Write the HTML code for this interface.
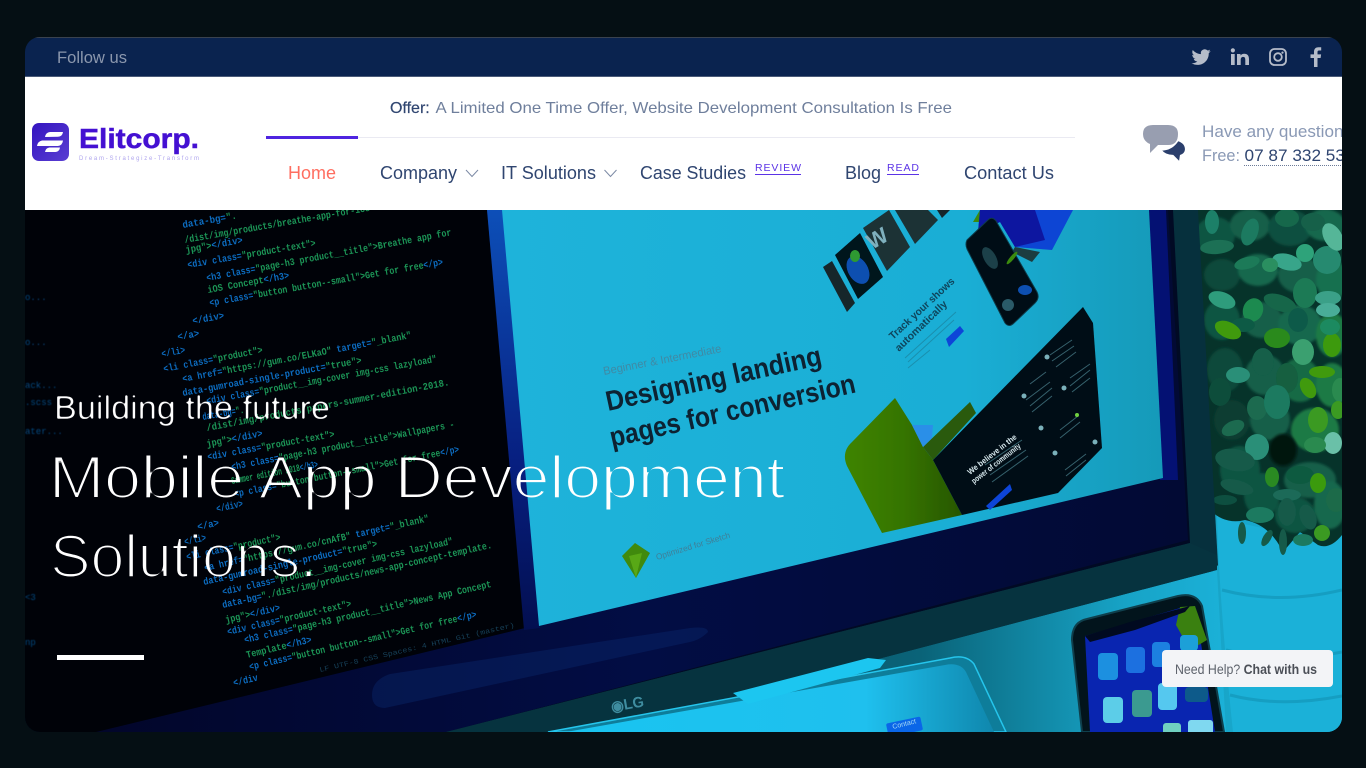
<!DOCTYPE html>
<html lang="en"><head><meta charset="utf-8"><title>Elitcorp</title>
<style>
html,body{margin:0;padding:0;width:1366px;height:768px;overflow:hidden;background:#050f14}
svg{display:block;position:absolute;left:0;top:0}
text{font-family:"Liberation Sans",sans-serif}
.n{font-size:18px;fill:#2f4570}
.code text{font-family:"Liberation Mono",monospace;font-size:10px;font-weight:bold;fill:#1b9556}
.code tspan{fill:#0b6cc0}
.dim{fill:#0a4a80;font-family:"Liberation Mono",monospace;font-size:9px}
</style></head><body>
<svg width="1366" height="768" viewBox="0 0 1366 768" xmlns="http://www.w3.org/2000/svg">
<defs>
<clipPath id="page"><rect x="25" y="37" width="1317" height="695" rx="15"/></clipPath>
<clipPath id="hero"><rect x="25" y="210" width="1317" height="522"/></clipPath>
<filter id="thin" x="-5%" y="-20%" width="110%" height="140%"><feMorphology operator="erode" radius="1"/><feGaussianBlur stdDeviation="0.3"/></filter>
<filter id="thin2" x="-5%" y="-20%" width="110%" height="140%"><feGaussianBlur stdDeviation="0.7"/><feComponentTransfer><feFuncA type="linear" slope="3.4" intercept="-1.75"/></feComponentTransfer></filter>
<filter id="b3"><feGaussianBlur stdDeviation="0.35"/></filter>
<filter id="b6"><feGaussianBlur stdDeviation="0.6"/></filter>
<filter id="b1" x="-5%" y="-5%" width="110%" height="110%"><feGaussianBlur stdDeviation="1.2"/></filter>
<linearGradient id="wall" x1="0" x2="1" y1="0" y2="0"><stop offset="0" stop-color="#07475c"/><stop offset=".55" stop-color="#0a6378"/><stop offset=".85" stop-color="#17a3c6"/><stop offset="1" stop-color="#1bb1d8"/></linearGradient>
<linearGradient id="cy" x1="0" x2="1" y1="0" y2="0"><stop offset="0" stop-color="#1eb3da"/><stop offset=".7" stop-color="#1aaed5"/><stop offset="1" stop-color="#159ab9"/></linearGradient>
<linearGradient id="strip" x1="0" x2="0" y1="0" y2="1"><stop offset="0" stop-color="#0d4fb8"/><stop offset=".6" stop-color="#071f80"/><stop offset="1" stop-color="#030f50"/></linearGradient>
<linearGradient id="navy" x1="0" x2="1" y1="0" y2="0"><stop offset="0" stop-color="#02062a"/><stop offset=".5" stop-color="#020d44"/><stop offset="1" stop-color="#020a34"/></linearGradient>
<linearGradient id="logo" x1="0" x2="1" y1="0" y2="1"><stop offset="0" stop-color="#3414c0"/><stop offset="1" stop-color="#5a3fd2"/></linearGradient>
<linearGradient id="tab" x1="0" x2="1" y1="0" y2="0"><stop offset="0" stop-color="#19c4f0"/><stop offset=".7" stop-color="#1fc0ee"/><stop offset="1" stop-color="#0f87ad"/></linearGradient>
<linearGradient id="grn" x1="0" x2="1" y1="0" y2="0"><stop offset="0" stop-color="#3f8400"/><stop offset=".5" stop-color="#357400"/><stop offset="1" stop-color="#275600"/></linearGradient>
</defs>
<g clip-path="url(#page)">
<!-- top bar -->
<rect x="25" y="37" width="1317" height="40" fill="#0a234f"/>
<rect x="25" y="37" width="1317" height="1" fill="#3a424f"/>
<rect x="25" y="76" width="1317" height="1" fill="#4a5a78"/>
<text x="57" y="63" font-size="17" fill="#8b97ad" textLength="70" lengthAdjust="spacingAndGlyphs">Follow us</text>
<path transform="translate(1191.500 47.500) scale(.8)" fill="#b5bcc9" d="M23.95 4.57a10 10 0 0 1-2.82.77 4.96 4.96 0 0 0 2.16-2.72c-.95.55-2 .96-3.12 1.19a4.92 4.92 0 0 0-8.38 4.48C7.69 8.1 4.07 6.13 1.64 3.16a4.82 4.82 0 0 0-.67 2.48c0 1.71.87 3.21 2.19 4.1a4.9 4.9 0 0 1-2.23-.62v.06a4.92 4.92 0 0 0 3.95 4.83 4.9 4.9 0 0 1-2.21.08 4.94 4.94 0 0 0 4.6 3.42A9.87 9.87 0 0 1 0 19.54a13.94 13.94 0 0 0 7.55 2.21c9.05 0 14-7.5 14-13.98 0-.21 0-.42-.02-.63a9.94 9.94 0 0 0 2.46-2.55z"/>
<path fill="#b5bcc9" d="M1231 54h3.700v11H1231zM1232.850 48.300a2.100 2.100 0 1 1 0 4.200 2.100 2.100 0 0 1 0-4.200zM1237 54h3.500v1.600c.7-1.200 2-1.900 3.700-1.900 3.500 0 4.800 2.100 4.800 5.500V65h-3.700v-5.100c0-1.600-.4-3-2.100-3-1.800 0-2.500 1.300-2.500 3V65H1237z"/>
<g fill="none" stroke="#b5bcc9" stroke-width="1.800"><rect x="1270" y="49" width="16" height="16" rx="4.500"/><circle cx="1278" cy="57" r="3.800"/></g><circle cx="1282.500" cy="52.600" r="1.100" fill="#b5bcc9"/>
<path fill="#b5bcc9" d="M1314 67v-9h-3.500v-3.600h3.500v-2.600c0-3 1.800-4.600 4.500-4.600 1.300 0 2.400.1 2.700.1v3.200h-1.900c-1.500 0-1.800.7-1.800 1.700v2.200h3.600l-.5 3.600h-3.100v9z"/>
<!-- white header -->
<rect x="25" y="77" width="1317" height="133" fill="#fff"/>
<rect x="32" y="123" width="37" height="38" rx="7" fill="url(#logo)"/>
<path fill="#fff" d="M45 137q.6-4.500 5-5H63q-.6 4.500-5 4.800zM37 146q.6-4.500 5-5.500H63q-.6 5-5 5.500zM45 152q.6-4 4.500-4.500H60q-.6 4.200-4.500 4.500z"/>
<text x="79" y="148" font-size="28" font-weight="bold" fill="#4410d2" stroke="#4410d2" stroke-width=".5" textLength="120" lengthAdjust="spacingAndGlyphs">Elitcorp.</text>
<text x="79" y="160" font-size="6" fill="#b0a6ee" textLength="120">Dream-Strategize-Transform</text>
<text x="390" y="113" font-size="16" fill="#2f4570" stroke="#2f4570" stroke-width=".2">Offer:</text>
<text x="435.500" y="113" font-size="16" fill="#6f7f9c" textLength="516.500" lengthAdjust="spacingAndGlyphs">A Limited One Time Offer, Website Development Consultation Is Free</text>
<rect x="266" y="137" width="809" height="1" fill="#eaeaf2"/>
<rect x="266" y="136" width="92" height="3" fill="#4f24e0"/>
<text x="288" y="179" font-size="18" fill="#ff6e60" textLength="48" lengthAdjust="spacingAndGlyphs">Home</text>
<text class="n" x="380" y="179" textLength="77" lengthAdjust="spacingAndGlyphs">Company</text>
<path d="M466 170l6 6.500 6-6.500" fill="none" stroke="#7c8aa5" stroke-width="1"/>
<text class="n" x="501" y="179" textLength="95" lengthAdjust="spacingAndGlyphs">IT Solutions</text>
<path d="M604.500 170l6 6.500 6-6.500" fill="none" stroke="#7c8aa5" stroke-width="1"/>
<text class="n" x="640" y="179" textLength="106" lengthAdjust="spacingAndGlyphs">Case Studies</text>
<text x="755" y="171" font-size="10.500" fill="#5b33e6" textLength="46">REVIEW</text>
<rect x="755" y="174" width="46" height="1" fill="#5b33e6"/>
<text class="n" x="845" y="179" textLength="36" lengthAdjust="spacingAndGlyphs">Blog</text>
<text x="887" y="171" font-size="10.500" fill="#5b33e6" textLength="32">READ</text>
<rect x="887" y="174" width="32" height="1" fill="#5b33e6"/>
<text class="n" x="964" y="179" textLength="90" lengthAdjust="spacingAndGlyphs">Contact Us</text>
<!-- chat icon -->
<path fill="#989eb0" d="M1153 125H1168Q1178 125 1178 134 1178 145 1168 145H1158L1150 153V144Q1143 141 1143 134 1143 125 1153 125z"/>
<path fill="#2b3f6c" stroke="#fff" stroke-width="1.200" d="M1161 150Q1172 150 1178 140.500 1186 143 1185.500 150 1185 154 1180.500 155.500L1179.500 162 1173 155.500Q1165 155.500 1161 150z"/>
<text x="1202" y="137" font-size="16.500" fill="#8a99b5" textLength="150" lengthAdjust="spacingAndGlyphs">Have any questions</text>
<text x="1202" y="161" font-size="16.500" fill="#8a99b5" textLength="38" lengthAdjust="spacingAndGlyphs">Free:</text>
<text x="1244.500" y="161" font-size="16.500" fill="#2f4570" textLength="110" lengthAdjust="spacingAndGlyphs">07 87 332 535</text>
<line x1="1244" y1="165.500" x2="1342" y2="165.500" stroke="#6b7a98" stroke-width="1" stroke-dasharray="1 1"/>
<!-- HERO -->
<g clip-path="url(#hero)">
<rect x="25" y="210" width="1317" height="522" fill="#000208"/>
<polygon points="1200,510 1342,510 1342,732 400,732 1000,590" fill="url(#wall)"/>
<!-- pot -->
<path d="M1217 515Q1280 540 1342 525V732H1233Q1219 600 1217 515z" fill="#1bb1d8"/>
<path d="M1222 590Q1280 605 1342 590M1226 650Q1280 665 1342 652M1230 695Q1280 708 1342 696" stroke="#159ec2" stroke-width="3" fill="none"/>
<!-- plant -->
<path d="M1190 210H1342V535Q1330 550 1318 545L1300 532 1283 552Q1270 525 1245 520 1225 525 1210 510z" fill="#06332a"/>
<g filter="url(#b1)">
<ellipse cx="1215" cy="235" rx="20" ry="18" fill="#0e5442"/><ellipse cx="1250" cy="225" rx="20" ry="16" fill="#125f48"/><ellipse cx="1290" cy="228" rx="22" ry="18" fill="#0d5040"/><ellipse cx="1325" cy="225" rx="20" ry="16" fill="#14684e"/>
<ellipse cx="1222" cy="275" rx="18" ry="16" fill="#0b4a3a"/><ellipse cx="1258" cy="270" rx="20" ry="16" fill="#14684e"/><ellipse cx="1300" cy="275" rx="22" ry="18" fill="#125f48"/><ellipse cx="1332" cy="280" rx="16" ry="20" fill="#16704f"/>
<ellipse cx="1222" cy="320" rx="18" ry="20" fill="#0e5442"/><ellipse cx="1262" cy="320" rx="20" ry="18" fill="#125f48"/><ellipse cx="1300" cy="325" rx="22" ry="20" fill="#14684e"/><ellipse cx="1332" cy="335" rx="16" ry="22" fill="#1c7a45"/>
<ellipse cx="1225" cy="370" rx="18" ry="22" fill="#0b4a3a"/><ellipse cx="1265" cy="375" rx="20" ry="20" fill="#125f48"/><ellipse cx="1300" cy="380" rx="20" ry="22" fill="#166a44"/><ellipse cx="1332" cy="385" rx="16" ry="22" fill="#1c7a45"/>
<ellipse cx="1232" cy="420" rx="18" ry="20" fill="#0a3e32"/><ellipse cx="1270" cy="420" rx="20" ry="20" fill="#125f48"/><ellipse cx="1315" cy="430" rx="24" ry="22" fill="#1c7a45"/>
<ellipse cx="1240" cy="470" rx="20" ry="24" fill="#0e5442"/><ellipse cx="1310" cy="480" rx="26" ry="18" fill="#125f48"/><ellipse cx="1262" cy="495" rx="18" ry="22" fill="#0e5442"/><ellipse cx="1295" cy="515" rx="20" ry="18" fill="#0e5442"/><ellipse cx="1330" cy="505" rx="16" ry="24" fill="#14684e"/>
</g>
<ellipse cx="1283" cy="450" rx="14" ry="16" fill="#021410" filter="url(#b1)"/>
<g filter="url(#b3)">
<ellipse cx="1217" cy="247" rx="17" ry="7" transform="rotate(-5 1217 247)" fill="#1b6f55"/><ellipse cx="1287" cy="262" rx="15" ry="8" transform="rotate(15 1287 262)" fill="#38a58a"/><ellipse cx="1327" cy="260" rx="14" ry="14" fill="#268a70"/><ellipse cx="1333" cy="237" rx="9" ry="15" transform="rotate(-30 1333 237)" fill="#54b698"/><ellipse cx="1305" cy="253" rx="9" ry="9" fill="#2ea37a"/><ellipse cx="1222" cy="300" rx="14" ry="8" transform="rotate(20 1222 300)" fill="#2f9c7c"/><ellipse cx="1253" cy="310" rx="10" ry="12" transform="rotate(20 1253 310)" fill="#1f8a50"/><ellipse cx="1305" cy="293" rx="12" ry="15" fill="#1c7a55"/><ellipse cx="1328" cy="298" rx="13" ry="7" fill="#3aa088"/><ellipse cx="1328" cy="310" rx="12" ry="7" fill="#4aad98"/><ellipse cx="1280" cy="303" rx="17" ry="8" transform="rotate(20 1280 303)" fill="#14664a"/><ellipse cx="1243" cy="325" rx="12" ry="7" fill="#115a44"/><ellipse cx="1228" cy="330" rx="14" ry="8" transform="rotate(25 1228 330)" fill="#3f9a10"/><ellipse cx="1277" cy="338" rx="13" ry="10" fill="#2a8a1a"/><ellipse cx="1303" cy="352" rx="11" ry="13" fill="#3aa070"/><ellipse cx="1332" cy="345" rx="9" ry="12" fill="#3d9a10"/><ellipse cx="1330" cy="327" rx="10" ry="8" fill="#1f8a60"/><ellipse cx="1298" cy="320" rx="10" ry="12" fill="#105a48"/><ellipse cx="1263" cy="362" rx="11" ry="14" fill="#125f48"/><ellipse cx="1287" cy="378" rx="11" ry="15" fill="#125f40"/><ellipse cx="1238" cy="375" rx="12" ry="8" fill="#2a8f78"/><ellipse cx="1322" cy="372" rx="13" ry="6" fill="#3f9a10"/><ellipse cx="1308" cy="388" rx="7" ry="11" transform="rotate(-30 1308 388)" fill="#3f9a10"/><ellipse cx="1220" cy="392" rx="11" ry="14" fill="#0d4d3a"/><ellipse cx="1257" cy="408" rx="10" ry="12" fill="#1a6a50"/><ellipse cx="1277" cy="402" rx="13" ry="17" fill="#1a7a60"/><ellipse cx="1318" cy="420" rx="10" ry="13" fill="#3a9a20"/><ellipse cx="1233" cy="428" rx="12" ry="7" transform="rotate(-25 1233 428)" fill="#1a6a50"/><ellipse cx="1257" cy="447" rx="12" ry="13" fill="#2a8f78"/><ellipse cx="1333" cy="443" rx="9" ry="11" fill="#6ac0a8"/><ellipse cx="1315" cy="445" rx="11" ry="8" fill="#2a8a50"/><ellipse cx="1235" cy="460" rx="20" ry="11" transform="rotate(10 1235 460)" fill="#125a48"/><ellipse cx="1300" cy="475" rx="14" ry="9" fill="#105a40"/><ellipse cx="1318" cy="483" rx="8" ry="10" fill="#3a9a10"/><ellipse cx="1272" cy="477" rx="7" ry="10" fill="#2a8a20"/><ellipse cx="1237" cy="487" rx="17" ry="7" transform="rotate(15 1237 487)" fill="#125a48"/><ellipse cx="1287" cy="495" rx="14" ry="6" fill="#1a6a58"/><ellipse cx="1287" cy="512" rx="9" ry="14" fill="#125a48"/><ellipse cx="1308" cy="517" rx="8" ry="13" transform="rotate(-20 1308 517)" fill="#125a48"/><ellipse cx="1260" cy="515" rx="14" ry="8" fill="#1a7a60"/><ellipse cx="1322" cy="533" rx="8" ry="8" fill="#3a9a20"/><ellipse cx="1283" cy="542" rx="4" ry="13" fill="#125a48"/><ellipse cx="1303" cy="540" rx="10" ry="6" fill="#1a7a60"/><ellipse cx="1267" cy="538" rx="4" ry="9" transform="rotate(30 1267 538)" fill="#125a48"/><ellipse cx="1242" cy="533" rx="4" ry="11" fill="#125a48"/><ellipse cx="1250" cy="232" rx="8" ry="14" transform="rotate(20 1250 232)" fill="#1a7a60"/><ellipse cx="1287" cy="218" rx="12" ry="9" fill="#16684c"/><ellipse cx="1313" cy="222" rx="12" ry="9" fill="#14604a"/><ellipse cx="1212" cy="222" rx="7" ry="12" fill="#1f8068"/><ellipse cx="1247" cy="263" rx="13" ry="6" transform="rotate(-15 1247 263)" fill="#1b7a58"/><ellipse cx="1270" cy="265" rx="8" ry="7" fill="#2a8f60"/><ellipse cx="1340" cy="390" rx="8" ry="12" fill="#2a8a50"/><ellipse cx="1336" cy="500" rx="10" ry="12" fill="#1a6a48"/><ellipse cx="1338" cy="410" rx="7" ry="9" fill="#3a9a20"/><ellipse cx="1225" cy="500" rx="12" ry="5" fill="#0f5040"/>
</g>
<!-- monitor -->
<polygon points="25,210 1198,210 1218,565 1212,572 600,732 25,732" fill="#06303d"/>
<polygon points="25,210 1173,210 1190,543 446,732 25,732" fill="#010a24"/>
<polygon points="487,210 1168,210 1188,540 446,732 96,732" fill="url(#navy)"/>
<polygon points="1149,210 1166,210 1178,480 1160,480" fill="#04127a" opacity=".9"/>
<polygon points="25,210 487,210 525,628 96,732 25,732" fill="#000208"/>
<polygon points="487,210 503,210 540,628 524,630" fill="url(#strip)"/>
<polygon points="502,210 1149,210 1163,478 539,626" fill="url(#cy)"/>
<path d="M372 695Q372 680 390 674L690 628Q708 626 708 632 700 640 690 642L385 708Q372 708 372 695z" fill="#0a2a70" opacity=".4"/>
<!-- screen content -->
<g filter="url(#b3)">
<text transform="translate(604 375) rotate(-11)" font-size="11.500" fill="#3f8aa5" textLength="120" lengthAdjust="spacingAndGlyphs">Beginner &amp; Intermediate</text>
<text transform="translate(608 411) rotate(-12.200)" font-size="28" font-weight="bold" fill="#0a2230" textLength="220" lengthAdjust="spacingAndGlyphs">Designing landing</text>
<text transform="translate(612 447) rotate(-12.600)" font-size="28" font-weight="bold" fill="#0a2230" textLength="251" lengthAdjust="spacingAndGlyphs">pages for conversion</text>
<polygon points="823,267 832,261 855,303 847,312" fill="#16262c"/>
<polygon points="835,255 860,233 883,277 858,299" fill="#03121a"/><ellipse cx="858" cy="270" rx="10" ry="15" transform="rotate(-30 858 270)" fill="#0d4fb0"/><ellipse cx="855" cy="256" rx="5" ry="6" fill="#2f9a30"/>
<polygon points="863,228 889,210 910,247 887,271" fill="#1a3036"/>
<text transform="translate(872 250) rotate(-30)" font-size="22" font-weight="bold" fill="#7fb0bd">W</text>
<polygon points="895,210 928,210 938,220 915,244" fill="#1a3036"/>
<polygon points="937,210 950,210 942,218" fill="#14252a"/>
<polygon points="973,222 980,210 985,222" fill="#3a8a10"/>
<polygon points="978,232 980,210 1073,210 1052,250 1015,247 1000,222" fill="#0a44d4"/>
<polygon points="980,210 1035,210 1045,240 1015,247 1000,222 978,232" fill="#0818a0"/>
<polygon points="1015,247 1040,252 1032,262 1012,252" fill="#1c3c40"/>
<path d="M967 240L988 220Q992 216 996 221L1037 292Q1040 298 1035 303L1014 323Q1009 328 1005 323L967 249Q965 244 967 240z" fill="#020d14" stroke="#0b3a48"/>
<ellipse cx="990" cy="258" rx="6" ry="12" transform="rotate(-30 990 258)" fill="#1a4048"/><ellipse cx="1025" cy="290" rx="7" ry="5" fill="#0d4fb0"/><ellipse cx="1008" cy="305" rx="6" ry="6" fill="#2a5a68"/><ellipse cx="1012" cy="258" rx="2" ry="8" transform="rotate(40 1012 258)" fill="#3a8a10"/>
<text transform="translate(893 340) rotate(-43)" font-size="10.500" font-weight="bold" fill="#10455c" textLength="85" lengthAdjust="spacingAndGlyphs">Track your shows</text>
<text transform="translate(899 352) rotate(-44)" font-size="10.500" font-weight="bold" fill="#10455c" textLength="68" lengthAdjust="spacingAndGlyphs">automatically</text>
<polygon points="946,339 960,326 964,331 949,347" fill="#0a44d8"/>
<path d="M905 358L956 312M908 362L954 320M908 368L930 350" stroke="#1a8fae" stroke-width="1" fill="none"/>
<path d="M895 398L852 442Q841 452 847 466L882 533 962 515 933 460 923 447 912 425z" fill="url(#grn)"/>
<polygon points="923,447 970,402 976,413 933,460" fill="#2a5a08"/>
<polygon points="912,425 933,425 932,438 923,447" fill="#2a8fe8"/>
<polygon points="933,460 1083,307 1093,323 1102,448 1058,493 962,515" fill="#030d14"/>
<g stroke="#35626e" stroke-width="1" fill="none"><path d="M1050 355L1072 340M1052 361L1074 346M1056 367L1076 352"/><path d="M1030 384L1046 372M1026 400L1050 382M1030 406L1052 388M1032 412L1052 396"/><path d="M1070 378L1090 364M1070 386L1090 370M1072 392L1090 378"/><path d="M1060 430L1078 416M1060 438L1080 422"/><path d="M1065 470L1086 454M1066 476L1086 460"/><path d="M985 465L1022 440M990 475L1026 450M992 482L1028 456"/></g>
<g fill="#7ab0ba"><circle cx="1047" cy="357" r="2.500"/><circle cx="1024" cy="396" r="2.500"/><circle cx="1064" cy="388" r="2.500"/><circle cx="1041" cy="428" r="2.500"/><circle cx="1055" cy="453" r="2.500"/><circle cx="1095" cy="442" r="2.500"/></g><circle cx="1077" cy="415" r="2" fill="#6fd040"/>
<text transform="translate(970 475) rotate(-38)" font-size="8" font-weight="bold" fill="#d5e8ee" textLength="60" lengthAdjust="spacingAndGlyphs">We believe in the</text>
<text transform="translate(974 484) rotate(-38)" font-size="8" font-weight="bold" fill="#d5e8ee" textLength="60" lengthAdjust="spacingAndGlyphs">power of community</text>
<polygon points="986,506 1010,484 1012,490 990,510" fill="#0a44d8"/>
<polygon points="622,556 635,543 650,553 636,578" fill="#3f8a0a"/><polygon points="629,556 642,553 636,578" fill="#59a814"/>
<text transform="translate(657 560) rotate(-17)" font-size="8.500" fill="#3f7f98" textLength="77" lengthAdjust="spacingAndGlyphs">Optimized for Sketch</text>
</g>
<!-- code -->
<g class="code" filter="url(#b3)">
<text transform="translate(183 228) rotate(-10)" textLength="55" lengthAdjust="spacingAndGlyphs"><tspan>data-bg=</tspan>".</text>
<text transform="translate(185 243) rotate(-9.900)" textLength="193" lengthAdjust="spacingAndGlyphs">/dist/img/products/breathe-app-for-ios-</text>
<text transform="translate(186 253) rotate(-10)" textLength="58" lengthAdjust="spacingAndGlyphs">jpg"&gt;<tspan>&lt;/div&gt;</tspan></text>
<text transform="translate(188 268) rotate(-9.800)" textLength="130" lengthAdjust="spacingAndGlyphs"><tspan>&lt;div class=</tspan>"product-text"&gt;</text>
<text transform="translate(207 281) rotate(-10.600)" textLength="249" lengthAdjust="spacingAndGlyphs"><tspan>&lt;h3 class=</tspan>"page-h3 product__title"&gt;Breathe app for</text>
<text transform="translate(208 293) rotate(-10.300)" textLength="83" lengthAdjust="spacingAndGlyphs">iOS Concept<tspan>&lt;/h3&gt;</tspan></text>
<text transform="translate(210 306) rotate(-10)" textLength="237" lengthAdjust="spacingAndGlyphs"><tspan>&lt;p class=</tspan>"button button--small"&gt;Get for free<tspan>&lt;/p&gt;</tspan></text>
<text transform="translate(193 324) rotate(-10)" textLength="32" lengthAdjust="spacingAndGlyphs"><tspan>&lt;/div&gt;</tspan></text>
<text transform="translate(178 340) rotate(-10)" textLength="22" lengthAdjust="spacingAndGlyphs"><tspan>&lt;/a&gt;</tspan></text>
<text transform="translate(162 357) rotate(-10)" textLength="24" lengthAdjust="spacingAndGlyphs"><tspan>&lt;/li&gt;</tspan></text>
<text transform="translate(164 372) rotate(-11)" textLength="101" lengthAdjust="spacingAndGlyphs"><tspan>&lt;li class=</tspan>"product"&gt;</text>
<text transform="translate(183 382) rotate(-10.900)" textLength="233" lengthAdjust="spacingAndGlyphs"><tspan>&lt;a href=</tspan>"https://gum.co/ELKaO" <tspan>target=</tspan>"_blank"</text>
<text transform="translate(183 396) rotate(-10.400)" textLength="182" lengthAdjust="spacingAndGlyphs"><tspan>data-gumroad-single-product=</tspan>"true"&gt;</text>
<text transform="translate(207 404) rotate(-10.400)" textLength="234" lengthAdjust="spacingAndGlyphs"><tspan>&lt;div class=</tspan>"product__img-cover img-css lazyload"</text>
<text transform="translate(203 420) rotate(-10)" textLength="42" lengthAdjust="spacingAndGlyphs"><tspan>data-bg=</tspan>".</text>
<text transform="translate(207 431) rotate(-10.700)" textLength="247" lengthAdjust="spacingAndGlyphs">/dist/img/products/papers-summer-edition-2018.</text>
<text transform="translate(207 447) rotate(-11)" textLength="57" lengthAdjust="spacingAndGlyphs">jpg"&gt;<tspan>&lt;/div&gt;</tspan></text>
<text transform="translate(208 460) rotate(-10.300)" textLength="129" lengthAdjust="spacingAndGlyphs"><tspan>&lt;div class=</tspan>"product-text"&gt;</text>
<text transform="translate(232 470) rotate(-10.900)" textLength="227" lengthAdjust="spacingAndGlyphs"><tspan>&lt;h3 class=</tspan>"page-h3 product__title"&gt;Wallpapers -</text>
<text transform="translate(232 484) rotate(-11)" textLength="88" lengthAdjust="spacingAndGlyphs">Summer edition 2018<tspan>&lt;/h3&gt;</tspan></text>
<text transform="translate(235 497) rotate(-11.300)" textLength="229" lengthAdjust="spacingAndGlyphs"><tspan>&lt;p class=</tspan>"button button--small"&gt;Get for free<tspan>&lt;/p&gt;</tspan></text>
<text transform="translate(217 512) rotate(-12)" textLength="27" lengthAdjust="spacingAndGlyphs"><tspan>&lt;/div&gt;</tspan></text>
<text transform="translate(198 530) rotate(-12)" textLength="22" lengthAdjust="spacingAndGlyphs"><tspan>&lt;/a&gt;</tspan></text>
<text transform="translate(185 545) rotate(-12)" textLength="22" lengthAdjust="spacingAndGlyphs"><tspan>&lt;/li&gt;</tspan></text>
<text transform="translate(187 560) rotate(-12)" textLength="96" lengthAdjust="spacingAndGlyphs"><tspan>&lt;li class=</tspan>"product"&gt;</text>
<text transform="translate(205 571) rotate(-12.500)" textLength="230" lengthAdjust="spacingAndGlyphs"><tspan>&lt;a href=</tspan>"https://gum.co/cnAfB" <tspan>target=</tspan>"_blank"</text>
<text transform="translate(204 585) rotate(-12.500)" textLength="178" lengthAdjust="spacingAndGlyphs"><tspan>data-gumroad-single-product=</tspan>"true"&gt;</text>
<text transform="translate(223 595) rotate(-12.500)" textLength="236" lengthAdjust="spacingAndGlyphs"><tspan>&lt;div class=</tspan>"product__img-cover img-css lazyload"</text>
<text transform="translate(223 608) rotate(-12.600)" textLength="276" lengthAdjust="spacingAndGlyphs"><tspan>data-bg=</tspan>"./dist/img/products/news-app-concept-template.</text>
<text transform="translate(226 623) rotate(-13)" textLength="56" lengthAdjust="spacingAndGlyphs">jpg"&gt;<tspan>&lt;/div&gt;</tspan></text>
<text transform="translate(228 635) rotate(-13)" textLength="127" lengthAdjust="spacingAndGlyphs"><tspan>&lt;div class=</tspan>"product-text"&gt;</text>
<text transform="translate(245 643) rotate(-12.800)" textLength="253" lengthAdjust="spacingAndGlyphs"><tspan>&lt;h3 class=</tspan>"page-h3 product__title"&gt;News App Concept</text>
<text transform="translate(247 658) rotate(-13.500)" textLength="67" lengthAdjust="spacingAndGlyphs">Template<tspan>&lt;/h3&gt;</tspan></text>
<text transform="translate(250 670) rotate(-13.100)" textLength="233" lengthAdjust="spacingAndGlyphs"><tspan>&lt;p class=</tspan>"button button--small"&gt;Get for free<tspan>&lt;/p&gt;</tspan></text>
<text transform="translate(320 672) rotate(-13)" font-size="7" textLength="200" lengthAdjust="spacingAndGlyphs" style="fill:#164058;font-size:7px;font-weight:normal">LF UTF-8 CSS Spaces: 4 HTML Git (master)</text>
<text transform="translate(234 686) rotate(-13)" textLength="25" lengthAdjust="spacingAndGlyphs"><tspan>&lt;/div</tspan></text>
</g>
<g filter="url(#b6)">
<text class="dim" x="25" y="388">ack...</text><text class="dim" x="25" y="405">.scss</text><text class="dim" x="25" y="434">ater...</text><text class="dim" x="25" y="300">o...</text><text class="dim" x="25" y="345">o...</text><text class="dim" x="25" y="600">&lt;3</text><text class="dim" x="25" y="645">np</text>
</g>
<!-- bezel chin + tablet -->
<polygon points="1000,627 1217,570 1226,732 548,732 600,732" fill="url(#wall)"/>
<polygon points="446,732 1190,543 1217,555 1217,570 600,732" fill="#06333f"/>
<text transform="translate(612 712) rotate(-10)" font-size="15" font-weight="bold" fill="#3f8da0" textLength="33" lengthAdjust="spacingAndGlyphs">◉LG</text>
<path d="M548 732L950 658Q966 654 974 664L1006 732z" fill="#0e7d9a" stroke="#25c5ec" stroke-width="1.500"/>
<path d="M566 732L945 665Q960 662 966 672L994 732z" fill="url(#tab)"/>
<polygon points="733,693 868,658 886,660 880,668 748,704" fill="#1cc6f0"/>
<rect x="887" y="720" width="35" height="14" rx="2" transform="rotate(-12 904 727)" fill="#0a66e8"/>
<text transform="translate(893 729) rotate(-14)" font-size="7" fill="#a8dcf5">Contact</text>
<!-- phone -->
<path d="M1072 640Q1072 622 1087 619L1178 596Q1196 592 1202 606L1224 732H1082z" fill="#02141c" stroke="#0f3f4c" stroke-width="2"/>
<path d="M1085 636L1180 608Q1192 606 1197 618L1215 732H1090z" fill="#0925b0"/>
<path d="M1180 607L1195 606 1207 640 1190 650 1176 625z" fill="#3a8010"/>
<path d="M1085 636L1130 622 1190 606 1185 612 1135 630 1090 642z" fill="#010a20"/>
<g filter="url(#b3)">
<rect x="1098" y="653" width="20" height="27" rx="4" fill="#1a90e0"/><rect x="1126" y="647" width="19" height="26" rx="4" fill="#1a70e0"/><rect x="1152" y="642" width="18" height="25" rx="4" fill="#1a80e0"/><rect x="1180" y="635" width="18" height="16" rx="4" fill="#1ca0d8"/>
<rect x="1103" y="697" width="20" height="26" rx="4" fill="#5ccde8"/><rect x="1132" y="690" width="20" height="27" rx="4" fill="#3a9a90"/><rect x="1158" y="683" width="19" height="27" rx="4" fill="#55c8ef"/><rect x="1185" y="687" width="23" height="15" rx="4" fill="#0a5a8a"/>
<rect x="1163" y="723" width="18" height="12" rx="3" fill="#6fd0c0"/><rect x="1188" y="720" width="25" height="15" rx="3" fill="#7fd8f0"/>
</g>
<!-- headline -->
<text x="54" y="419" font-size="33" fill="#fff" filter="url(#thin2)" textLength="276" lengthAdjust="spacingAndGlyphs">Building the future</text>
<text x="49" y="498" font-size="60" fill="#fff" filter="url(#thin)" textLength="736" lengthAdjust="spacingAndGlyphs">Mobile App Development</text>
<text x="50" y="577" font-size="60" fill="#fff" filter="url(#thin)" textLength="267" lengthAdjust="spacingAndGlyphs">Solutions.</text>
<rect x="57" y="655" width="87" height="5" fill="#fff"/>
<!-- chat -->
<rect x="1162" y="650" width="171" height="37" rx="4" fill="#f3f4f7"/>
<text x="1175" y="674" font-size="14" fill="#5e636c" textLength="142" lengthAdjust="spacingAndGlyphs">Need Help? <tspan font-weight="bold" fill="#4b4f57">Chat with us</tspan></text>
</g>
</g>
</svg>
</body></html>
